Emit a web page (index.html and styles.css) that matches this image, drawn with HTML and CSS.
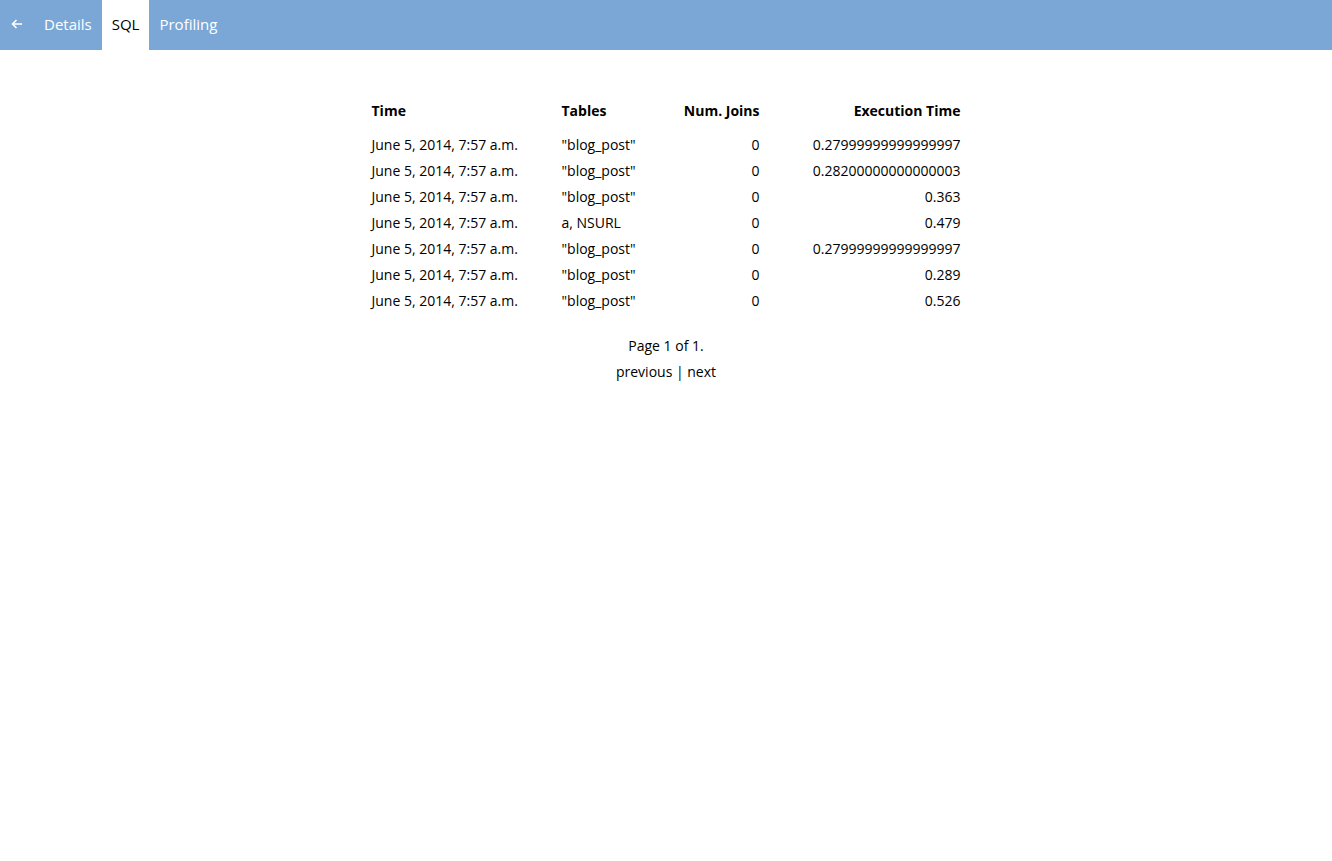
FILE: index.html
```html
<!DOCTYPE html>
<html>
<head>
<meta charset="utf-8">
<link rel="stylesheet" href="styles.css">
</head>
<body>
<nav class="topbar">
  <a class="tab back" href="#"><svg width="12" height="10" viewBox="0 0 12 10"><path d="M11 5H1.5M5.5 1L1.5 5l4 4" fill="none" stroke="#fff" stroke-width="1.6"/></svg></a>
  <a class="tab" href="#">Details</a>
  <a class="tab active" href="#">SQL</a>
  <a class="tab" href="#">Profiling</a>
</nav>
<main class="content">
  <table class="queries">
    <colgroup><col class="c1"><col class="c2"><col class="c3"><col class="c4"></colgroup>
    <thead>
      <tr><th class="left">Time</th><th class="left">Tables</th><th class="right">Num. Joins</th><th class="right">Execution Time</th></tr>
    </thead>
    <tbody>
      <tr><td>June 5, 2014, 7:57 a.m.</td><td>"blog_post"</td><td class="right">0</td><td class="right">0.27999999999999997</td></tr>
      <tr><td>June 5, 2014, 7:57 a.m.</td><td>"blog_post"</td><td class="right">0</td><td class="right">0.28200000000000003</td></tr>
      <tr><td>June 5, 2014, 7:57 a.m.</td><td>"blog_post"</td><td class="right">0</td><td class="right">0.363</td></tr>
      <tr><td>June 5, 2014, 7:57 a.m.</td><td>a, NSURL</td><td class="right">0</td><td class="right">0.479</td></tr>
      <tr><td>June 5, 2014, 7:57 a.m.</td><td>"blog_post"</td><td class="right">0</td><td class="right">0.27999999999999997</td></tr>
      <tr><td>June 5, 2014, 7:57 a.m.</td><td>"blog_post"</td><td class="right">0</td><td class="right">0.289</td></tr>
      <tr><td>June 5, 2014, 7:57 a.m.</td><td>"blog_post"</td><td class="right">0</td><td class="right">0.526</td></tr>
    </tbody>
  </table>
  <div class="pagination">
    <div class="line">Page 1 of 1.</div>
    <div class="line"><a href="#">previous</a> | <a href="#">next</a></div>
  </div>
</main>
</body>
</html>
```
FILE: styles.css
```css
html, body {
  margin: 0;
  padding: 0;
  background: #fff;
}
body {
  font-family: "Open Sans", "Liberation Sans", sans-serif;
  font-size: 14px;
  color: #000;
}
.topbar {
  display: flex;
  height: 50px;
  background: #7ba7d7;
}
.tab {
  display: flex;
  align-items: center;
  padding: 0 10px 2px;
  color: #fff;
  text-decoration: none;
  font-size: 15px;
}
.tab.back {
  width: 34px;
  box-sizing: border-box;
  padding: 0 0 2px 11px;
}
.tab.active {
  background: #fff;
  color: #000;
}
.content {
  display: flex;
  flex-direction: column;
  align-items: center;
  padding-top: 50px;
}
.queries {
  border-collapse: collapse;
  table-layout: fixed;
  width: 589px;
}
.c1 { width: 190px; }
.c2 { width: 98px; }
.c3 { width: 100px; }
.c4 { width: 201px; }
.queries th {
  font-weight: bold;
  font-size: 14px;
  height: 20px;
  padding: 0 0 11px 0;
}
.queries td {
  height: 26px;
  padding: 0;
  white-space: nowrap;
}
.left { text-align: left; }
.right { text-align: right; }
.pagination {
  margin-top: 20px;
  text-align: center;
}
.pagination .line {
  height: 26px;
  line-height: 26px;
}
.pagination a {
  color: #000;
  text-decoration: none;
}
```
